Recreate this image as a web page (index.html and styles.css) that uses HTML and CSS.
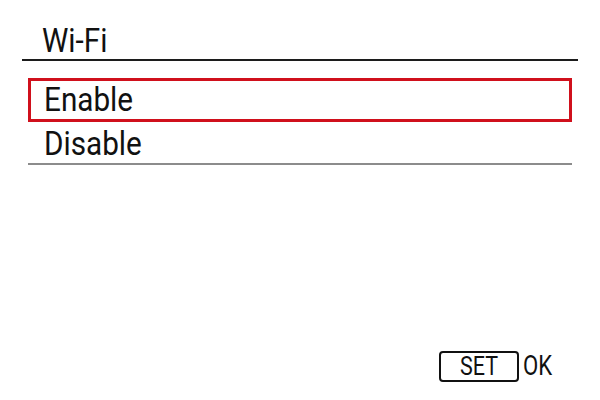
FILE: index.html
```html
<!DOCTYPE html>
<html lang="en">
<head>
    <meta charset="UTF-8">
    <title>Wi-Fi</title>
    <link rel="stylesheet" href="styles.css">
</head>
<body>
<div class="screen">
    <div class="title"><span class="label">Wi-Fi</span></div>
    <div class="menu">
        <div class="item selected"><span class="label">Enable</span></div>
        <div class="item"><span class="label">Disable</span></div>
    </div>
    <div class="footer">
        <span class="setKey"><span class="label">SET</span></span>
        <span class="ok"><span class="label">OK</span></span>
    </div>
</div>
</body>
</html>
```

FILE: styles.css
```css
body {
    margin: 0;
    background: #ffffff;
    color: #111111;
    font-family: Roboto, "Liberation Sans", sans-serif;
}

/* camera menu font is narrower than anything installed */
.label {
    display: inline-block;
    white-space: nowrap;
    transform: scaleX(0.9);
    transform-origin: left center;
}

.screen {
    width: 600px;
    height: 400px;
    box-sizing: border-box;
    padding: 0 22px;
    display: flex;
    flex-direction: column;
}

.title {
    padding: 24px 0 2px 20px;
    height: 33px;
    line-height: 33px;
    font-size: 33px;
    border-bottom: 2px solid #1c1c1c;
}

.menu {
    margin: 17px 6px 0;
    border-bottom: 2px solid #8c8c8c;
}

.menu > .item {
    height: 38px;
    line-height: 38px;
    font-size: 33px;
    padding-left: 13px;
    border: 3px solid transparent;
}

.menu > .item:last-child {
    border-bottom-width: 0;
}

.menu > .item.selected {
    border-color: #d0101c;
}

.footer {
    margin-top: auto;
    padding: 0 26px 18px 0;
    display: flex;
    justify-content: flex-end;
    align-items: center;
}

.footer > .setKey {
    width: 76px;
    height: 27px;
    line-height: 27px;
    border: 2px solid #111111;
    border-radius: 4px;
    text-align: center;
    font-size: 25px;
}

.footer > .setKey > .label {
    transform: scaleX(0.86);
    transform-origin: center;
}

.footer > .ok {
    width: 29px;
    margin-left: 4px;
    font-size: 27px;
    line-height: 31px;
}

.footer > .ok > .label {
    transform: scaleX(0.82);
}
```
